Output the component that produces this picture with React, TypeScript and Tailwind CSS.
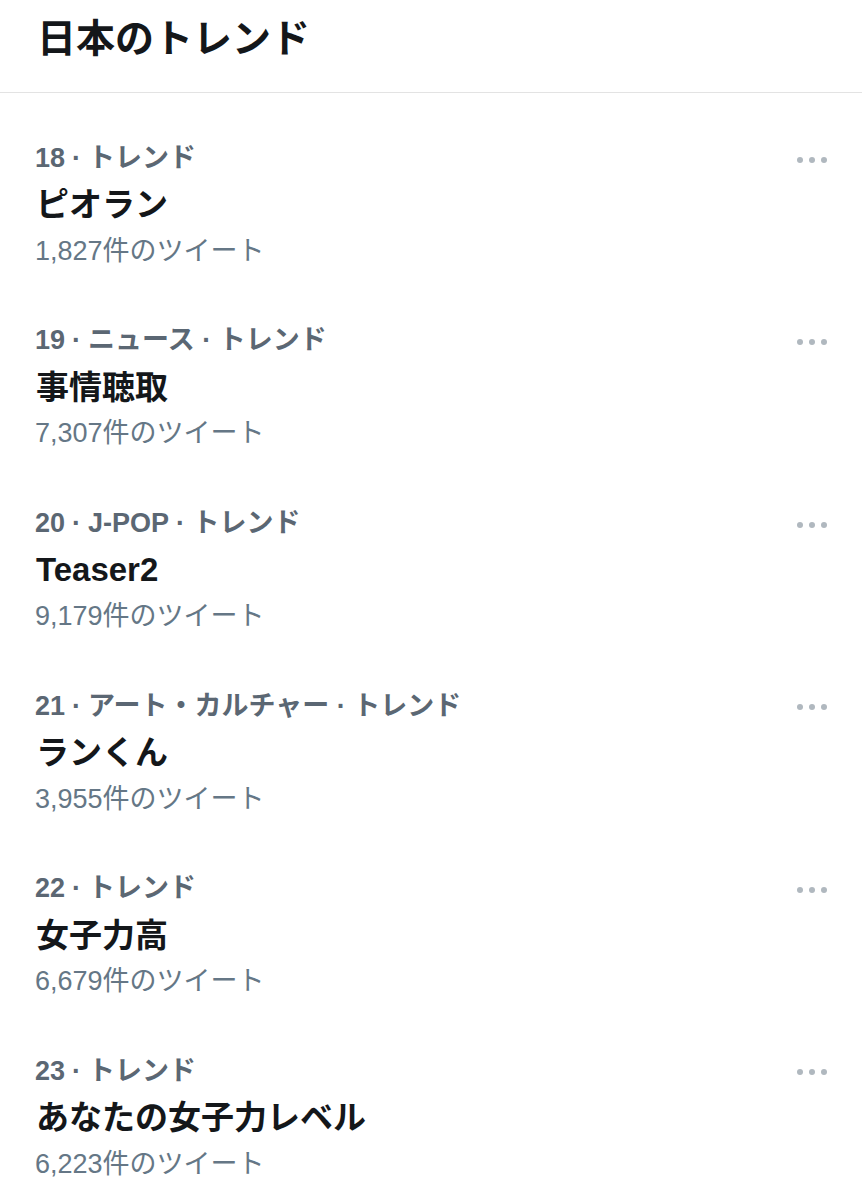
import React from 'react';

const trends = [
  { rank: 18, category: 'トレンド', name: 'ピオラン', count: '1,827' },
  { rank: 19, category: 'ニュース · トレンド', name: '事情聴取', count: '7,307' },
  { rank: 20, category: 'J-POP · トレンド', name: 'Teaser2', count: '9,179' },
  { rank: 21, category: 'アート・カルチャー · トレンド', name: 'ランくん', count: '3,955' },
  { rank: 22, category: 'トレンド', name: '女子力高', count: '6,679' },
  { rank: 23, category: 'トレンド', name: 'あなたの女子力レベル', count: '6,223' },
];

const MoreDots = () => (
  <div className="flex items-center gap-[6px] pt-[3px]">
    <span className="w-[6px] h-[6px] rounded-full bg-[#b0b8bf]" />
    <span className="w-[6px] h-[6px] rounded-full bg-[#b0b8bf]" />
    <span className="w-[6px] h-[6px] rounded-full bg-[#b0b8bf]" />
  </div>
);

const App = () => {
  return (
    <div
      className="w-[862px] h-[1200px] bg-white overflow-hidden"
      style={{ fontFamily: '"Liberation Sans", "Noto Sans CJK JP", sans-serif' }}
    >
      <div className="h-[93px] border-b border-[#e3e3e3] flex items-start pl-[37px] pt-[14px]">
        <h1 className="text-[39px] leading-[50px] font-bold text-[#14171a]">日本のトレンド</h1>
      </div>

      <div className="pt-[20px]">
        {trends.map((t) => (
          <div key={t.rank} className="h-[182.6px] pt-[22px] pl-[35px] pr-[35px] flex justify-between items-start">
            <div className="flex flex-col">
              <div className="h-[46px] flex items-center text-[27px] font-bold text-[#5b6773]">
                <span>{t.rank}</span>
                <span className="mx-[7px]">·</span>
                <span>{t.category}</span>
              </div>
              <div className="h-[48px] flex items-center text-[33px] font-bold text-[#14171a] pl-[1px]">
                {t.name}
              </div>
              <div className="h-[44px] flex items-center text-[27px] text-[#657786]">
                {t.count}件のツイート
              </div>
            </div>
            <div className="h-[46px] flex items-center">
              <MoreDots />
            </div>
          </div>
        ))}
      </div>
    </div>
  );
};

export default App;
